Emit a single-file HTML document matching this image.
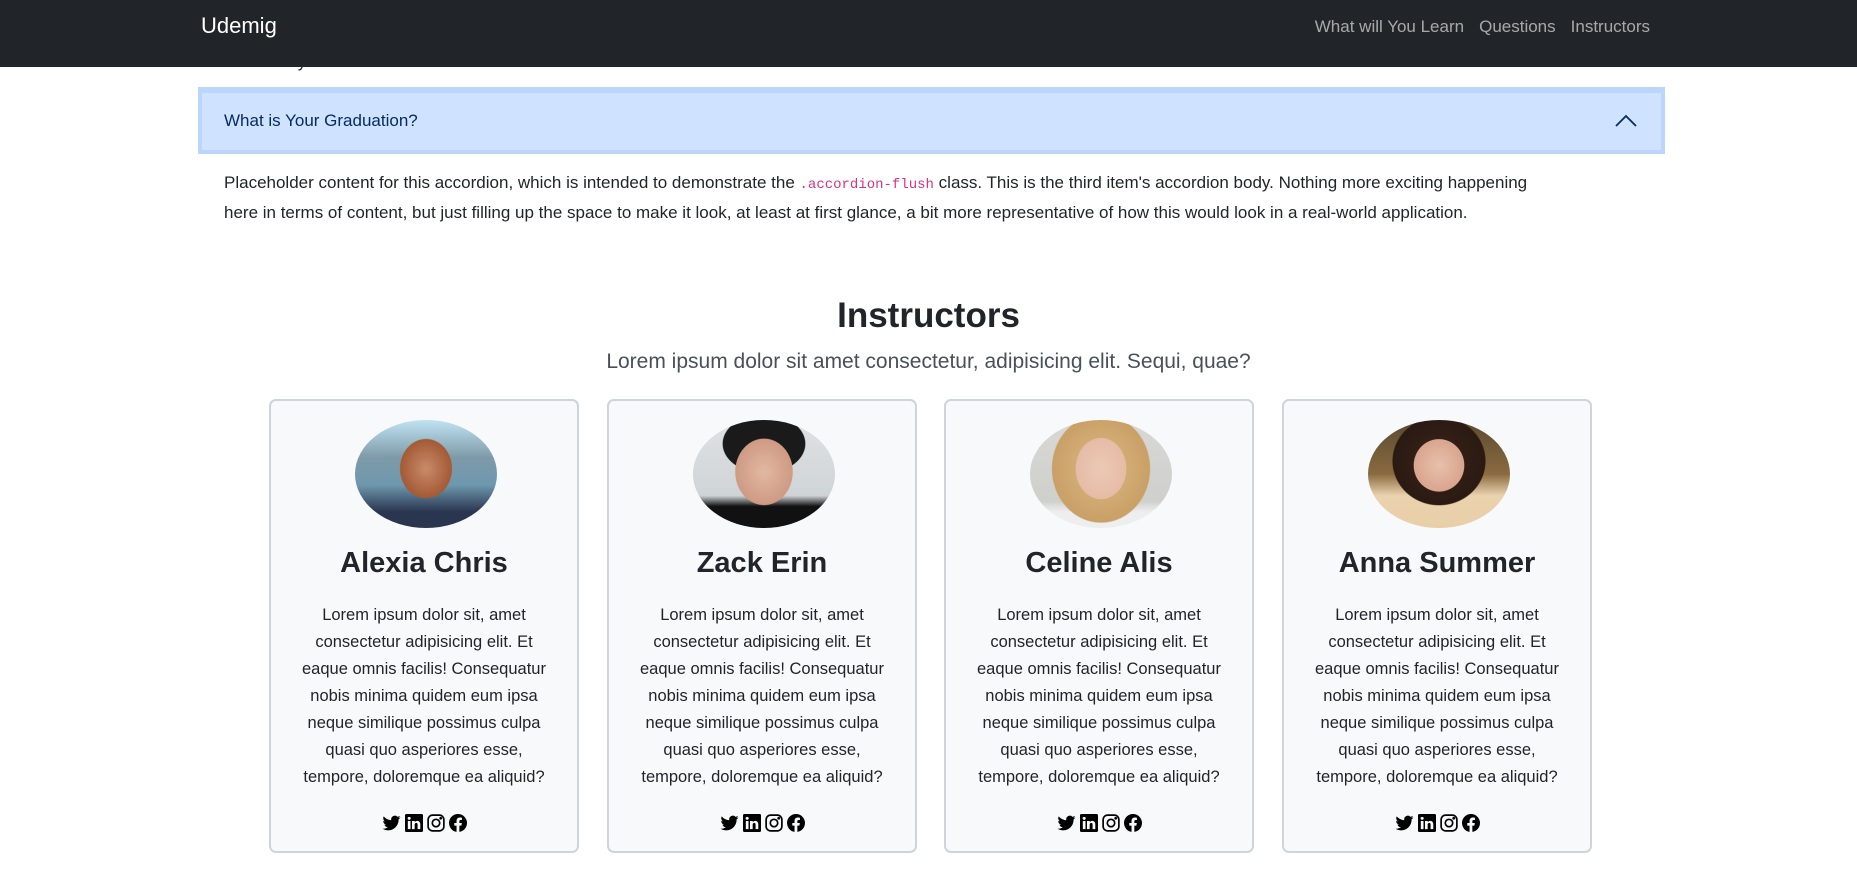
<!DOCTYPE html>
<html><head><meta charset="utf-8">
<style>
*{box-sizing:border-box;margin:0;padding:0}
body{width:1857px;height:877px;overflow:hidden;background:#fff;font-family:"Liberation Sans",sans-serif;color:#212529;position:relative}
.nav{position:absolute;left:0;top:0;width:1857px;height:67px;background:#212529;z-index:2}
.brand{position:absolute;left:201px;top:13px;font-size:22px;color:#fff}
.links{position:absolute;right:207px;top:17px;font-size:17px;color:rgba(255,255,255,.6)}
.links span{margin-left:15px}
.peek{position:absolute;left:224px;top:52px;font-size:17px;color:#212529}
.acc{position:absolute;left:198px;top:87px;width:1467px;height:67px;background:#cfe2ff;border:4px solid #bcd6fb;border-top:6px solid #bcd6fb}
.acc .t{position:absolute;left:22px;top:18px;font-size:17px;color:#052c65}
.acc svg{position:absolute;right:24px;top:20px}
.body{position:absolute;left:224px;top:169px;width:1360px;font-size:17px;line-height:28px}
code{font-family:"Liberation Mono",monospace;color:#d63384;font-size:14px}
h2{position:absolute;left:0;width:1857px;top:296px;text-align:center;font-size:35px;font-weight:bold}
.sub{position:absolute;left:0;width:1857px;top:350px;text-align:center;font-size:21px;font-weight:300;color:#495057}
.card{position:absolute;top:399px;width:310px;height:454px;background:#f8f9fa;border:2px solid #ced4da;border-radius:7px;text-align:center}
.ph{position:absolute;left:84px;top:19px;width:142px;height:108px;border-radius:50%}
.card h3{position:absolute;left:0;width:100%;top:146px;font-size:29px;font-weight:bold}
.card p{position:absolute;left:20px;right:20px;top:201px;font-size:16.5px;line-height:27px}
.ic{position:absolute;left:0;width:100%;top:413px;display:flex;justify-content:center;gap:4px}
</style></head><body>
<div class="peek">What are your LinkedIn Account?</div>
<div class="nav"><div class="brand">Udemig</div><div class="links"><span>What will You Learn</span><span>Questions</span><span>Instructors</span></div></div>
<div class="acc"><div class="t">What is Your Graduation?</div><svg width="22" height="14" viewBox="0 0 22 14"><path d="M1 13 L11 3 L21 13" stroke="#052c65" stroke-width="1.8" fill="none"/></svg></div>
<div class="body">Placeholder content for this accordion, which is intended to demonstrate the <code>.accordion-flush</code> class. This is the third item's accordion body. Nothing more exciting happening<br>here in terms of content, but just filling up the space to make it look, at least at first glance, a bit more representative of how this would look in a real-world application.</div>
<h2>Instructors</h2>
<div class="sub">Lorem ipsum dolor sit amet consectetur, adipisicing elit. Sequi, quae?</div>

<div class="card" style="left:269px"><div class="ph" style="background:radial-gradient(ellipse 30% 45% at 50% 45%,#c98a6a 0,#a45a35 60%,transparent 62%),linear-gradient(#bfe3f2 0,#7e9aa8 35%,#6e98ae 60%,#2a3550 85%)"></div><h3>Alexia Chris</h3><p>Lorem ipsum dolor sit, amet consectetur adipisicing elit. Et eaque omnis facilis! Consequatur nobis minima quidem eum ipsa neque similique possimus culpa quasi quo asperiores esse, tempore, doloremque ea aliquid?</p><div class="ic">ICONS</div></div>
<div class="card" style="left:607px"><div class="ph" style="background:radial-gradient(ellipse 25% 38% at 50% 48%,#e2b8a2 0,#cf9a84 80%,transparent 82%),radial-gradient(ellipse 32% 30% at 50% 22%,#1a1a1a 0,#1a1a1a 90%,transparent 92%),linear-gradient(#dfe2e4 0,#cfd4d6 70%,#111 80%)"></div><h3>Zack Erin</h3><p>Lorem ipsum dolor sit, amet consectetur adipisicing elit. Et eaque omnis facilis! Consequatur nobis minima quidem eum ipsa neque similique possimus culpa quasi quo asperiores esse, tempore, doloremque ea aliquid?</p><div class="ic">ICONS</div></div>
<div class="card" style="left:944px"><div class="ph" style="background:radial-gradient(ellipse 22% 35% at 50% 45%,#ecc9b5 0,#e6bca6 80%,transparent 82%),radial-gradient(ellipse 38% 55% at 50% 45%,#dcb986 0,#c9a066 90%,transparent 92%),linear-gradient(#d8d9d6 0,#cfcfcc 75%,#eee 85%)"></div><h3>Celine Alis</h3><p>Lorem ipsum dolor sit, amet consectetur adipisicing elit. Et eaque omnis facilis! Consequatur nobis minima quidem eum ipsa neque similique possimus culpa quasi quo asperiores esse, tempore, doloremque ea aliquid?</p><div class="ic">ICONS</div></div>
<div class="card" style="left:1282px"><div class="ph" style="background:radial-gradient(ellipse 22% 30% at 50% 42%,#e8c0ac 0,#d9a58e 80%,transparent 82%),radial-gradient(ellipse 36% 45% at 50% 38%,#3a2418 0,#2a1a12 90%,transparent 92%),linear-gradient(#5a4a30 0,#8a6a40 50%,#ead2ae 70%,#e8cfa8 100%)"></div><h3>Anna Summer</h3><p>Lorem ipsum dolor sit, amet consectetur adipisicing elit. Et eaque omnis facilis! Consequatur nobis minima quidem eum ipsa neque similique possimus culpa quasi quo asperiores esse, tempore, doloremque ea aliquid?</p><div class="ic">ICONS</div></div>

<script>
var ic='<svg width="19" height="18" viewBox="0 0 16 16"><path d="M5 14.5c6 0 9.3-5 9.3-9.3v-.4A6.7 6.7 0 0 0 16 3a6.5 6.5 0 0 1-1.9.5A3.3 3.3 0 0 0 15.5 1.7a6.6 6.6 0 0 1-2.1.8A3.3 3.3 0 0 0 7.8 5.5 9.3 9.3 0 0 1 1.1 2.1a3.3 3.3 0 0 0 1 4.4A3.3 3.3 0 0 1 .6 6.1a3.3 3.3 0 0 0 2.6 3.2 3.3 3.3 0 0 1-1.5.1 3.3 3.3 0 0 0 3.1 2.3A6.6 6.6 0 0 1 0 13.1a9.3 9.3 0 0 0 5 1.4"/></svg>'
+'<svg width="18" height="18" viewBox="0 0 16 16"><path d="M0 1.1C0 .5.5 0 1.2 0h13.6c.7 0 1.2.5 1.2 1.1v13.8c0 .6-.5 1.1-1.2 1.1H1.2C.5 16 0 15.5 0 14.9zM4.9 13.4V6.2H2.5v7.2zM3.7 5.2c.8 0 1.4-.6 1.4-1.3S4.5 2.6 3.7 2.6 2.3 3.2 2.3 3.9s.6 1.3 1.4 1.3m4.9 8.2v-4c0-.2 0-.4.1-.6.2-.4.6-.9 1.3-.9.9 0 1.2.7 1.2 1.7v3.8h2.4V9.3c0-2.2-1.2-3.2-2.7-3.2-1.3 0-1.8.7-2.2 1.2V6.2H6.2v7.2z"/></svg>'
+'<svg width="18" height="18" viewBox="0 0 16 16" fill="none" stroke="#000" stroke-width="1.5"><rect x="1" y="1" width="14" height="14" rx="4"/><circle cx="8" cy="8" r="3.3"/><circle cx="12.2" cy="3.8" r=".5" fill="#000"/></svg>'
+'<svg width="18" height="18" viewBox="0 0 16 16"><path d="M16 8a8 8 0 1 0-9.3 7.9v-5.6H4.7V8h2V6.2c0-2 1.2-3.1 3-3.1.9 0 1.8.2 1.8.2v2h-1c-1 0-1.3.6-1.3 1.2V8h2.2l-.4 2.3H9.2v5.6A8 8 0 0 0 16 8"/></svg>';
document.querySelectorAll('.ic').forEach(function(e){e.innerHTML=ic});
</script>
</body></html>
